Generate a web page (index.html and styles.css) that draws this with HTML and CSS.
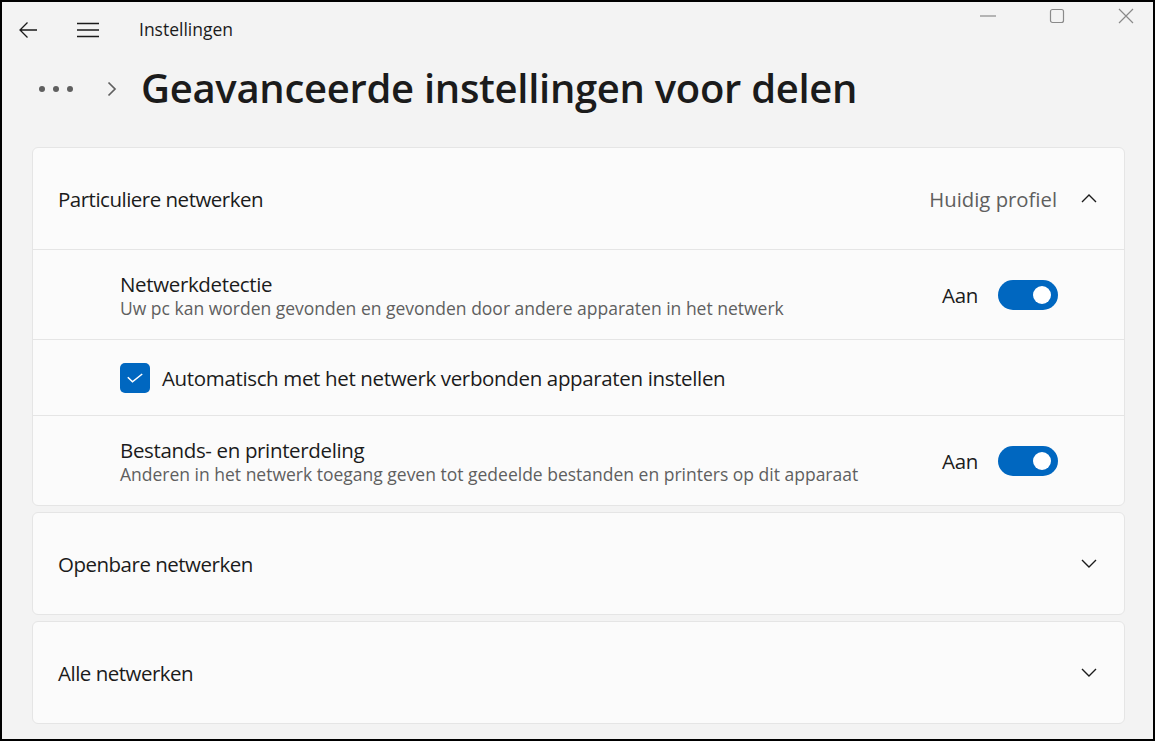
FILE: index.html
```html
<!DOCTYPE html>
<html lang="nl">
<head>
<meta charset="utf-8">
<title>Instellingen</title>
<link rel="stylesheet" href="styles.css">
</head>
<body>
<div class="window">
  <div class="titlebar">
    <button class="tb-btn back" aria-label="Terug">
      <svg width="20" height="20" viewBox="0 0 20 20"><path d="M19 10H2M9.5 2.5L2 10l7.5 7.5" fill="none" stroke="#1b1b1b" stroke-width="1.3"/></svg>
    </button>
    <button class="tb-btn menu" aria-label="Menu">
      <svg width="22" height="16" viewBox="0 0 22 16"><path d="M0 1.5h22M0 8h22M0 14.5h22" fill="none" stroke="#1b1b1b" stroke-width="1.4"/></svg>
    </button>
    <span class="app-title">Instellingen</span>
    <div class="controls">
      <span class="ctl"><svg width="16" height="16" viewBox="0 0 16 16"><path d="M0 8h16" stroke="#8a8a8a" stroke-width="1.2"/></svg></span>
      <span class="ctl"><svg width="16" height="16" viewBox="0 0 16 16"><rect x="1.5" y="1.5" width="13" height="13" rx="2" fill="none" stroke="#8a8a8a" stroke-width="1.2"/></svg></span>
      <span class="ctl"><svg width="16" height="16" viewBox="0 0 16 16"><path d="M1 1l14 14M15 1L1 15" stroke="#8a8a8a" stroke-width="1.2"/></svg></span>
    </div>
  </div>

  <div class="header">
    <span class="dots"><i></i><i></i><i></i></span>
    <svg class="crumb-chev" width="10" height="16" viewBox="0 0 10 16"><path d="M1.5 1.5L8 8l-6.5 6.5" fill="none" stroke="#5f5f5f" stroke-width="1.7"/></svg>
    <h1>Geavanceerde instellingen voor delen</h1>
  </div>

  <div class="content">
    <section class="card">
      <div class="card-head">
        <span class="head-label">Particuliere netwerken</span>
        <span class="head-meta">Huidig profiel</span>
        <svg class="chev" width="16" height="9" viewBox="0 0 16 9"><path d="M1 8L8 1l7 7" fill="none" stroke="#1b1b1b" stroke-width="1.4"/></svg>
      </div>
      <div class="row tall">
        <div class="row-text">
          <div class="row-title">Netwerkdetectie</div>
          <div class="row-sub">Uw pc kan worden gevonden en gevonden door andere apparaten in het netwerk</div>
        </div>
        <span class="state">Aan</span>
        <span class="toggle"><span class="knob"></span></span>
      </div>
      <div class="row short">
        <span class="checkbox"><svg width="16" height="10" viewBox="0 0 16 10"><path d="M0.8 4.2L5.5 8.8L15.2 1" fill="none" stroke="#fff" stroke-width="1.6"/></svg></span>
        <span class="check-label">Automatisch met het netwerk verbonden apparaten instellen</span>
      </div>
      <div class="row tall">
        <div class="row-text">
          <div class="row-title">Bestands- en printerdeling</div>
          <div class="row-sub">Anderen in het netwerk toegang geven tot gedeelde bestanden en printers op dit apparaat</div>
        </div>
        <span class="state">Aan</span>
        <span class="toggle"><span class="knob"></span></span>
      </div>
    </section>

    <section class="card">
      <div class="card-head">
        <span class="head-label">Openbare netwerken</span>
        <svg class="chev" width="16" height="9" viewBox="0 0 16 9"><path d="M1 1l7 7 7-7" fill="none" stroke="#1b1b1b" stroke-width="1.4"/></svg>
      </div>
    </section>

    <section class="card">
      <div class="card-head">
        <span class="head-label">Alle netwerken</span>
        <svg class="chev" width="16" height="9" viewBox="0 0 16 9"><path d="M1 1l7 7 7-7" fill="none" stroke="#1b1b1b" stroke-width="1.4"/></svg>
      </div>
    </section>
  </div>
</div>
</body>
</html>
```
FILE: styles.css
```css
* { box-sizing: border-box; }
html, body { margin: 0; padding: 0; }
body {
  width: 1155px;
  height: 741px;
  overflow: hidden;
  font-family: "Open Sans", "Noto Sans", sans-serif;
  color: #1b1b1b;
}
.window {
  width: 1155px;
  height: 741px;
  border: 2px solid #000;
  background: #f3f3f3;
  display: flex;
  flex-direction: column;
  overflow: hidden;
}
.titlebar {
  height: 56px;
  display: flex;
  align-items: center;
  flex-shrink: 0;
}
.tb-btn {
  border: 0;
  background: none;
  padding: 0;
  display: flex;
  align-items: center;
  justify-content: center;
}
.back { width: 20px; height: 20px; margin-left: 16px; }
.menu { width: 22px; height: 16px; margin-left: 39px; }
.app-title {
  margin-left: 40px;
  margin-bottom: 2px;
  font-size: 17.5px;
  color: #1b1b1b;
}
.controls {
  margin-left: auto;
  align-self: flex-start;
  display: flex;
  margin-right: -7px;
  padding-top: 4px;
}
.ctl {
  width: 69px;
  height: 20px;
  display: flex;
  justify-content: center;
  align-items: center;
}
.header {
  height: 62px;
  display: flex;
  align-items: center;
  padding-left: 37px;
  flex-shrink: 0;
}
.dots { display: flex; gap: 8px; }
.dots i {
  display: block;
  width: 6px;
  height: 6px;
  border-radius: 50%;
  background: #5f5f5f;
}
.crumb-chev { margin-left: 34px; }
h1 {
  margin: 0 0 3px 24px;
  font-size: 40px;
  font-weight: 600;
  letter-spacing: -0.3px;
  line-height: 54px;
  color: #1b1b1b;
}
.content {
  padding: 27px 28px 0 30px;
  display: flex;
  flex-direction: column;
  gap: 6px;
}
.card {
  background: #fbfbfb;
  border: 1px solid #e5e5e5;
  border-radius: 6px;
}
.card-head {
  height: 101px;
  display: flex;
  align-items: center;
  padding: 0 27px 0 25px;
}
.head-label { font-size: 20.5px; letter-spacing: -0.5px; }
.head-meta {
  margin-left: auto;
  font-size: 20.3px;
  color: #5f5f5f;
  margin-right: 24px;
}
.card-head .chev { margin-left: auto; }
.card-head .head-meta + .chev { margin-left: 0; }
.row {
  border-top: 1px solid #e5e5e5;
  display: flex;
  align-items: center;
  padding: 0 66px 0 87px;
}
.row.tall { height: 90px; }
.row.short { height: 76px; }
.row-text { flex: 1; display: flex; flex-direction: column; padding-top: 1px; }
.row-title { font-size: 20.5px; letter-spacing: -0.35px; line-height: 26px; }
.row-sub { font-size: 17.5px; line-height: 22px; color: #5f5f5f; }
.state { font-size: 20.5px; letter-spacing: -0.35px; margin-right: 20px; }
.toggle {
  width: 60px;
  height: 30px;
  border-radius: 15px;
  background: #0067c0;
  display: flex;
  align-items: center;
  justify-content: flex-end;
  padding-right: 7px;
}
.knob {
  width: 18px;
  height: 18px;
  border-radius: 50%;
  background: #fff;
}
.checkbox {
  width: 30px;
  height: 30px;
  border-radius: 5px;
  background: #0067c0;
  display: flex;
  align-items: center;
  justify-content: center;
}
.check-label { margin-left: 12px; font-size: 20.5px; letter-spacing: -0.35px; }
```
